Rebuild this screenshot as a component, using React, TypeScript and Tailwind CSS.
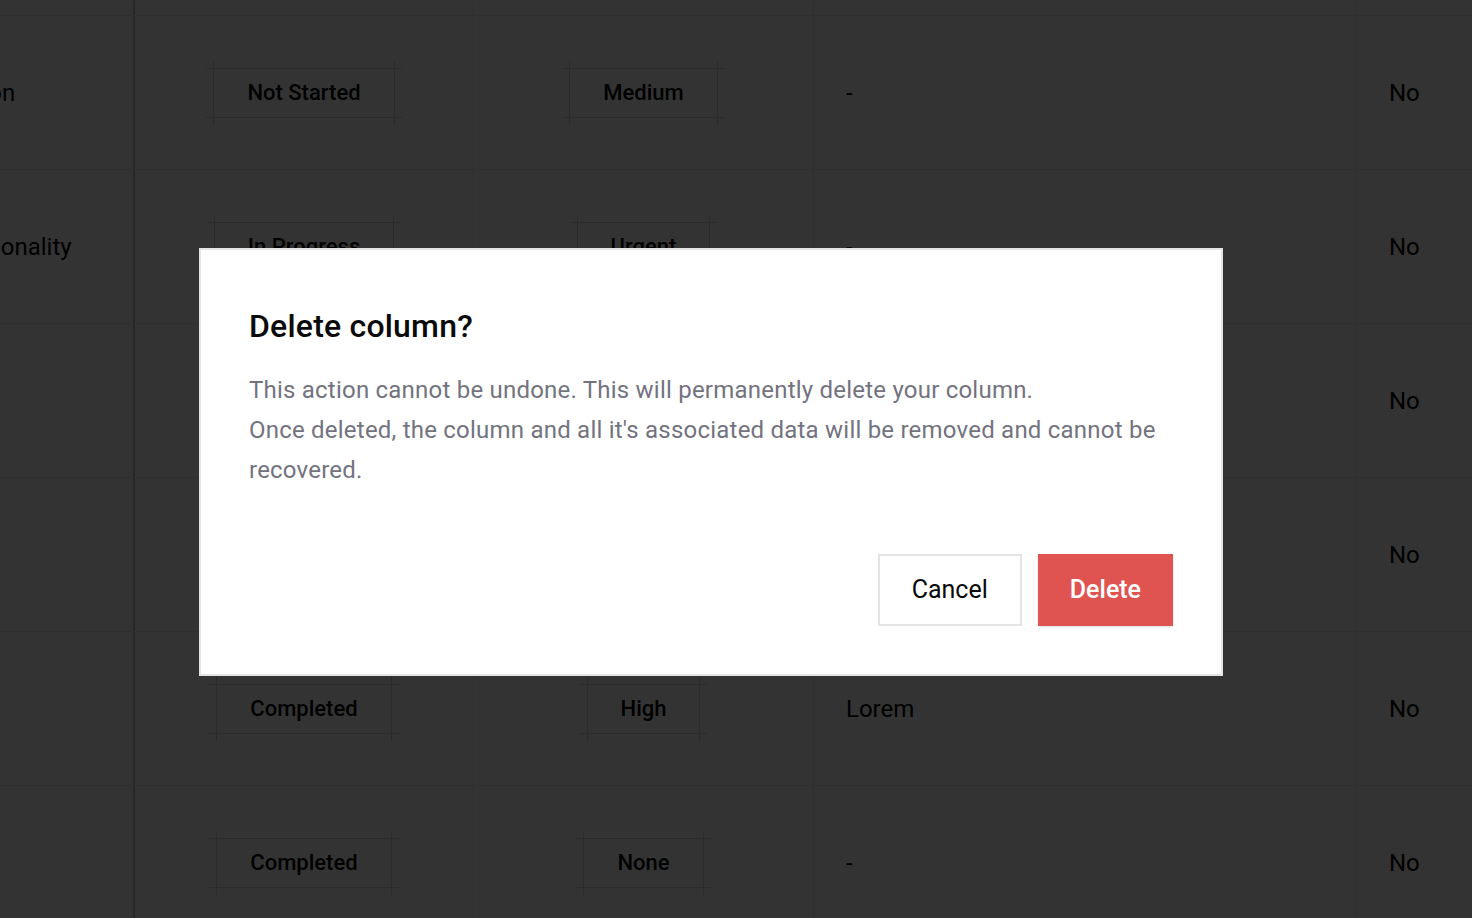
import React from "react";

type Row = { name: string; status: string; priority: string; note: string; flag: string };

const rows: Row[] = [
  { name: "Section", status: "Not Started", priority: "Medium", note: "-", flag: "No" },
  { name: "Functionality", status: "In Progress", priority: "Urgent", note: "-", flag: "No" },
  { name: "", status: "Completed", priority: "Low", note: "-", flag: "No" },
  { name: "", status: "Not Started", priority: "High", note: "-", flag: "No" },
  { name: "", status: "Completed", priority: "High", note: "Lorem", flag: "No" },
  { name: "", status: "Completed", priority: "None", note: "-", flag: "No" },
];

function Badge({ label }: { label: string }) {
  return (
    <div className="relative flex h-[50px] items-center px-[34px] text-[22px] font-medium text-black">
      <span className="absolute -left-[7px] -right-[7px] top-0 h-px bg-[#d6d6d6]" />
      <span className="absolute -left-[7px] -right-[7px] bottom-0 h-px bg-[#d6d6d6]" />
      <span className="absolute -top-[7px] -bottom-[7px] left-0 w-px bg-[#d6d6d6]" />
      <span className="absolute -top-[7px] -bottom-[7px] right-0 w-px bg-[#d6d6d6]" />
      <span className="relative">{label}</span>
    </div>
  );
}

function Cells({ row }: { row?: Row }) {
  return (
    <>
      <div className="flex w-[233px] shrink-0 items-center overflow-hidden whitespace-nowrap border-r-2 border-[#c2c2c2] pl-[33px] text-[24px] text-black">
        {row?.name}
      </div>
      <div className="flex w-[339px] shrink-0 items-center justify-center border-r border-[#e8e8e8]">
        {row && <Badge label={row.status} />}
      </div>
      <div className="flex w-[340px] shrink-0 items-center justify-center border-r border-[#e8e8e8]">
        {row && <Badge label={row.priority} />}
      </div>
      <div className="flex w-[543px] shrink-0 items-center border-r border-[#e8e8e8] pl-[32px] text-[24px] text-black">
        {row?.note}
      </div>
      <div className="flex flex-1 items-center pl-[32px] text-[24px] text-black">{row?.flag}</div>
    </>
  );
}

export default function App() {
  return (
    <div
      className="relative h-[918px] w-[1472px] overflow-hidden bg-white"
      style={{ fontFamily: "Roboto, 'Noto Sans', sans-serif" }}
    >
      <div className="-ml-[98px] flex w-[1700px] flex-col">
        <div className="flex h-[15px]">
          <Cells />
        </div>
        {rows.map((r, i) => (
          <div key={i} className="flex h-[154px] shrink-0 border-t border-[#e8e8e8]">
            <Cells row={r} />
          </div>
        ))}
        <div className="flex h-[154px] shrink-0 border-t border-[#e8e8e8]">
          <Cells />
        </div>
      </div>

      <div className="fixed inset-0 bg-black/80" />

      <div className="fixed inset-0 flex items-center justify-center pr-[50px] pt-[6px]">
        <div className="w-[1024px] border-2 border-[#e4e4e4] bg-white px-12 pb-12 pt-[56px]">
          <h2 className="h-10 text-[32px] font-medium leading-10 tracking-[0.2px] text-[#0a0a0a]">Delete column?</h2>
          <p className="mt-6 text-[24px] leading-10 tracking-[0.22px] text-[#737380]">
            This action cannot be undone. This will permanently delete your column.
            <br />
            Once deleted, the column and all it's associated data will be removed and cannot be recovered.
          </p>
          <div className="mt-16 flex justify-end gap-4">
            <button className="h-[72px] border-2 border-[#e4e4e4] bg-white px-8 text-[25px] text-[#0a0a0a]">
              Cancel
            </button>
            <button className="h-[72px] bg-[#df5450] px-8 text-[25px] font-medium text-white shadow-sm">
              Delete
            </button>
          </div>
        </div>
      </div>
    </div>
  );
}
